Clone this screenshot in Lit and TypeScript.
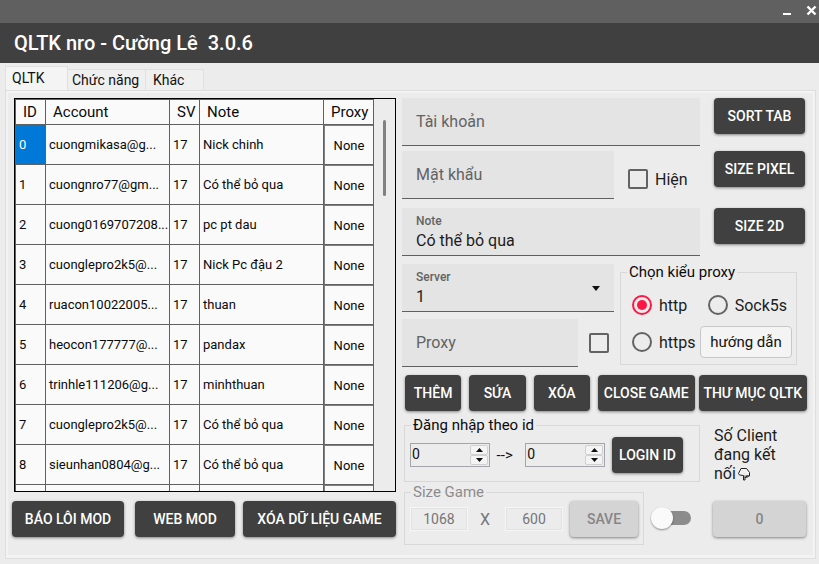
import { LitElement, html, css, svg, nothing } from "lit";
import { customElement, property, state } from "lit/decorators.js";

interface Account {
  id: number;
  account: string;
  sv: number;
  note: string;
  proxy: string;
}

const ACCOUNTS: Account[] = [
  { id: 0, account: "cuongmikasa@g...", sv: 17, note: "Nick chinh", proxy: "None" },
  { id: 1, account: "cuongnro77@gm...", sv: 17, note: "Có thể bỏ qua", proxy: "None" },
  { id: 2, account: "cuong0169707208...", sv: 17, note: "pc pt dau", proxy: "None" },
  { id: 3, account: "cuonglepro2k5@...", sv: 17, note: "Nick Pc đậu 2", proxy: "None" },
  { id: 4, account: "ruacon10022005...", sv: 17, note: "thuan", proxy: "None" },
  { id: 5, account: "heocon177777@...", sv: 17, note: "pandax", proxy: "None" },
  { id: 6, account: "trinhle111206@g...", sv: 17, note: "minhthuan", proxy: "None" },
  { id: 7, account: "cuonglepro2k5@...", sv: 17, note: "Có thể bỏ qua", proxy: "None" },
  { id: 8, account: "sieunhan0804@g...", sv: 17, note: "Có thể bỏ qua", proxy: "None" },
];

const base = css`
  * {
    box-sizing: border-box;
  }
  button,
  input,
  select {
    font: inherit;
    color: inherit;
    margin: 0;
    padding: 0;
    border: 0;
    background: none;
    border-radius: 0;
    appearance: none;
    outline: none;
    min-width: 0;
  }
`;

@customElement("account-table")
export class AccountTable extends LitElement {
  @property({ attribute: false }) rows: Account[] = [];
  @state() private selected = 0;

  static styles = [
    base,
    css`
      :host {
        display: grid;
        grid-template-columns: minmax(0, 1fr) 21px;
        align-items: start;
        flex: 1 1 0;
        min-height: 0;
        overflow: hidden;
        border: 1px solid #000;
        color: #0a0a0a;
      }
      table {
        width: 100%;
        table-layout: fixed;
        border-collapse: separate;
        border-spacing: 0;
        background: #fafafa;
        border-top: 1px solid #606060;
        border-left: 1px solid #606060;
      }
      th,
      td {
        padding: 0 0 0 3px;
        border-right: 1px solid #606060;
        border-bottom: 1px solid #606060;
        text-align: left;
        white-space: nowrap;
        overflow: hidden;
        font-size: 13px;
      }
      th {
        height: 25px;
        padding-left: 7px;
        font-size: 15px;
        font-weight: 400;
      }
      td {
        height: 40px;
      }
      .id,
      .sv {
        width: 30px;
      }
      .proxy {
        width: 50px;
      }
      .selected {
        background: #0078d7;
        color: #fff;
      }
      td.cell {
        padding: 0;
      }
      .cell button {
        display: block;
        width: 100%;
        height: 39px;
        border-top: 1px solid #808080;
        border-left: 1px solid #808080;
      }
      .gutter {
        padding: 21px 0 0 9px;
      }
      .thumb {
        width: 3px;
        height: 76px;
        border-radius: 2px;
        background: #808080;
      }
    `,
  ];

  render() {
    return html`
      <table>
        <thead>
          <tr>
            <th class="id">ID</th>
            <th>Account</th>
            <th class="sv">SV</th>
            <th>Note</th>
            <th class="proxy">Proxy</th>
          </tr>
        </thead>
        <tbody>
          ${this.rows.map(
            (r) => html`<tr @click=${() => (this.selected = r.id)}>
              <td class=${r.id === this.selected ? "selected" : ""}>${r.id}</td>
              <td>${r.account}</td>
              <td>${r.sv}</td>
              <td>${r.note}</td>
              <td class="cell"><button>${r.proxy}</button></td>
            </tr>`
          )}
          <tr>
            <td></td>
            <td></td>
            <td></td>
            <td></td>
            <td class="cell"><button aria-label="Proxy"></button></td>
          </tr>
        </tbody>
      </table>
      <div class="gutter"><div class="thumb"></div></div>
    `;
  }
}

@customElement("number-spin")
export class NumberSpin extends LitElement {
  @property() label = "";
  @property({ type: Number }) value = 0;

  static styles = [
    base,
    css`
      :host {
        display: flex;
        width: 80px;
        height: 24px;
        padding: 1px;
        border: 1px solid #a4a4ac;
        color: #111;
        font-size: 14px;
      }
      input {
        flex: 1;
        height: 18px;
        line-height: 18px;
      }
      .steps {
        display: flex;
        flex-direction: column;
        width: 18px;
      }
      .steps button {
        flex: 1;
        display: flex;
        align-items: center;
        justify-content: center;
        border: 1px solid #d0d0d0;
        border-radius: 2px;
        background: #f4f4f4;
      }
    `,
  ];

  render() {
    return html`
      <input aria-label=${this.label} .value=${String(this.value)} />
      <div class="steps">
        <button aria-label="+" @click=${() => this.value++}>
          <svg width="7" height="4"><path d="M0 4 3.500 0 7 4z" fill="#111" /></svg>
        </button>
        <button aria-label="-" @click=${() => this.value--}>
          <svg width="7" height="4"><path d="M0 0h7L3.500 4z" fill="#111" /></svg>
        </button>
      </div>
    `;
  }
}

@customElement("app-root")
export class AppRoot extends LitElement {
  static styles = [
    base,
    css`
      :host {
        display: flex;
        flex-direction: column;
        min-height: 100vh;
        background: #ececec;
        font-family: Roboto, "Liberation Sans", sans-serif;
        font-size: 16px;
        color: #1c1c1c;
      }
      .titlebar {
        display: flex;
        justify-content: flex-end;
        height: 23px;
        background: #606060;
      }
      .titlebar button {
        width: 24px;
        height: 23px;
      }
      .titlebar svg {
        display: block;
      }
      h1 {
        margin: 0;
        padding: 0 14px;
        height: 40px;
        line-height: 40px;
        background: #404040;
        color: #fff;
        font-size: 20px;
        font-weight: 500;
        white-space: pre;
      }
      .tabs {
        display: flex;
        align-items: flex-end;
        height: 27px;
        padding-left: 5px;
        font-size: 14px;
        color: #111;
      }
      .tab {
        height: 21px;
        padding: 0 4px 1px;
        text-align: left;
        white-space: nowrap;
        background: #efefef;
        border: 1px solid #e0e0e0;
        border-left: 0;
        border-bottom: 0;
      }
      .tab.functions {
        width: 78px;
      }
      .tab.other {
        width: 58px;
        padding-left: 7px;
      }
      .tab.active {
        width: 63px;
        height: 24px;
        padding: 0 6px 2px;
        border-left: 1px solid #e0e0e0;
        background: #f4f4f4;
      }
      .panel {
        flex: 1;
        margin: 0 3px 5px 5px;
        padding: 2px;
        border: 1px solid #dedede;
        background: #f3f3f3;
      }
      .content {
        display: grid;
        grid-template-columns: 384fr 405fr;
        column-gap: 6px;
        height: 100%;
        padding: 5px 6px 10px 4px;
        background: #ececec;
      }
      .left {
        display: flex;
        flex-direction: column;
        padding-bottom: 8px;
        min-width: 0;
      }
      account-table {
        margin-left: 2px;
      }
      .actions {
        display: flex;
        gap: 8px;
        margin-top: 9px;
      }
      .links {
        display: flex;
        gap: 11px;
        flex: 223 1 0;
      }
      .btn {
        display: block;
        height: 36px;
        border-radius: 4px;
        background: #404040;
        color: #fff;
        font-size: 14px;
        font-weight: 500;
        white-space: nowrap;
        text-align: center;
        box-shadow: 0 1px 3px rgba(0, 0, 0, 0.45);
      }
      .w-s {
        flex: 56 1 0;
      }
      .w-m {
        flex: 98 1 0;
      }
      .w-l {
        flex: 110 1 0;
      }
      .w-xl {
        flex: 153 1 0;
      }
      .pair {
        display: flex;
        gap: 4px;
        flex: 208 1 0;
      }
      .btn[disabled] {
        background: #d4d4d4;
        color: #868686;
      }
      .right {
        display: flex;
        flex-direction: column;
        min-width: 0;
      }
      .row {
        display: flex;
        align-items: flex-start;
        justify-content: space-between;
        padding-right: 2px;
      }
      .row + .row {
        margin-top: 5px;
      }
      .row + .row.spaced {
        margin-top: 9px;
      }
      .side {
        width: 91px;
        margin-left: 14px;
      }
      .grow {
        flex: 1;
      }
      .field {
        display: block;
        position: relative;
        height: 48px;
        background: #e4e4e4;
        border-bottom: 1px solid #606060;
      }
      .field input,
      .field select {
        display: block;
        width: 100%;
        height: 47px;
        padding: 0 14px;
      }
      .field input::placeholder {
        color: #636363;
        opacity: 1;
      }
      .field.filled input,
      .field.filled select {
        padding-top: 17px;
      }
      .caption {
        position: absolute;
        left: 14px;
        top: 6px;
        font-size: 12px;
        line-height: 14px;
        font-weight: 500;
        color: #636363;
      }
      .caret {
        position: absolute;
        right: 14px;
        top: 22px;
      }
      .check {
        display: flex;
        align-items: center;
        gap: 7px;
      }
      .check input {
        width: 20px;
        height: 20px;
        border: 2px solid #636363;
        border-radius: 2px;
      }
      .hien {
        width: 70px;
        margin: 18px 2px 0 14px;
      }
      .proxyarea {
        display: flex;
        gap: 6px;
        margin-top: 8px;
        padding-right: 10px;
      }
      .stack {
        flex: 1;
        min-width: 0;
        display: flex;
        flex-direction: column;
        gap: 7px;
      }
      .proxyline {
        display: flex;
        align-items: center;
        gap: 11px;
        padding-right: 5px;
      }
      fieldset {
        margin: 0;
        min-width: 0;
        padding: 0 5px;
        border: 1px solid #d8d8d8;
      }
      legend {
        height: 16px;
        margin-left: 1px;
        padding: 0 2px;
        line-height: 16px;
        font-size: 15px;
        color: #0a0a0a;
      }
      .kinds {
        width: 177px;
        height: 101px;
        padding: 0 4px 0 11px;
      }
      .kinds legend {
        margin-left: -5px;
      }
      .line {
        display: flex;
        justify-content: space-between;
        align-items: center;
        height: 32px;
        margin-top: 5px;
      }
      .line:first-of-type {
        margin-top: 9px;
      }
      .radio {
        display: flex;
        align-items: center;
        gap: 7px;
      }
      .radio input {
        width: 20px;
        height: 20px;
        border: 2px solid #636363;
        border-radius: 50%;
      }
      .radio input:checked {
        border-color: #ff1744;
        background: #ff1744;
        background-clip: content-box;
        padding: 3px;
      }
      .sock {
        margin-right: 5px;
      }
      .guide {
        width: 92px;
        height: 32px;
        border: 1px solid #c8c8c8;
        border-radius: 4px;
        background: #f4f4f4;
        font-size: 15px;
        color: #111;
      }
      .commands {
        display: flex;
        gap: 8px;
        margin-top: 8px;
        padding-left: 3px;
      }
      .bottom {
        display: flex;
        justify-content: space-between;
        margin-top: 6px;
        padding: 0 1px 0 2px;
      }
      .groups {
        width: 296px;
        display: flex;
        flex-direction: column;
        gap: 2px;
      }
      .login {
        height: 65px;
      }
      .size {
        width: 240px;
        height: 61px;
        color: #767676;
      }
      .size legend {
        color: #8c8c8c;
      }
      .inner {
        display: flex;
        align-items: center;
        height: 36px;
        margin-top: 1px;
      }
      .login .inner {
        justify-content: space-between;
        margin-top: 4px;
        padding-right: 11px;
      }
      .login .btn {
        width: 71px;
      }
      .login .to {
        margin-right: 6px;
        font-size: 15px;
        color: #111;
      }
      .size .btn {
        width: 68px;
        margin-left: auto;
      }
      .dim {
        width: 58px;
        height: 24px;
        border: 1px solid #f6f6f6;
        outline: 1px solid #e2e2e2;
        outline-offset: -2px;
        text-align: center;
        font-size: 14px;
      }
      .times {
        margin: 0 15px 0 12px;
      }
      .sizes {
        display: flex;
        align-items: flex-end;
        justify-content: space-between;
        padding-right: 9px;
      }
      .switch {
        display: block;
        width: 40px;
        height: 22px;
        margin-bottom: 16px;
      }
      .switch input {
        display: flex;
        align-items: center;
        width: 40px;
        height: 22px;
        background: linear-gradient(#8c8c8c, #8c8c8c) 8px 4px / 24px 14px no-repeat;
      }
      .switch input::before {
        content: "";
        width: 22px;
        height: 22px;
        border-radius: 50%;
        background: #fafafa;
        box-shadow: 0 1px 2px rgba(0, 0, 0, 0.4);
      }
      .switch input::after {
        content: "";
        width: 14px;
        height: 14px;
        margin-left: 4px;
        border-radius: 0 7px 7px 0;
        background: #8c8c8c;
      }
      .clients {
        display: flex;
        flex-direction: column;
        justify-content: space-between;
        width: 93px;
        padding: 9px 0 8px;
      }
      .clients p {
        margin: 0;
        padding: 0 16px 0 1px;
        line-height: 19px;
      }
      .clients .end {
        white-space: nowrap;
      }
      .clients svg {
        margin-left: 1px;
        vertical-align: -2px;
      }
    `,
  ];

  @state() private kind = "http";

  private radio(value: string, cls = "") {
    return html`<label class="radio ${cls}">
      <input
        type="radio"
        name="kind"
        .checked=${this.kind === value}
        @change=${() => (this.kind = value)}
      />${value}</label
    >`;
  }

  private field(label: string, value = "") {
    return html`<label class="field grow ${value ? "filled" : ""}">
      ${value ? html`<span class="caption">${label}</span>` : nothing}
      <input aria-label=${label} placeholder=${label} .value=${value} />
    </label>`;
  }

  render() {
    return html`
      <div class="titlebar">
        <button aria-label="Minimize">
          <svg width="24" height="23"><path d="M12 14h8" stroke="#fff" stroke-width="2" /></svg>
        </button>
        <button aria-label="Close">
          <svg width="24" height="23">
            <path d="M12.500 6.500l8 8M20.500 6.500l-8 8" stroke="#fff" stroke-width="2.400" />
          </svg>
        </button>
      </div>
      <h1>QLTK nro - Cường Lê  3.0.6</h1>
      <nav class="tabs">
        <button class="tab active">QLTK</button>
        <button class="tab functions">Chức năng</button>
        <button class="tab other">Khác</button>
      </nav>
      <main class="panel">
        <div class="content">
          <section class="left">
            <account-table .rows=${ACCOUNTS}></account-table>
            <div class="actions">
              <div class="links">
                <button class="btn w-l">BÁO LÔI MOD</button>
                <button class="btn w-m">WEB MOD</button>
              </div>
              <button class="btn w-xl">XÓA DỮ LIỆU GAME</button>
            </div>
          </section>
          <section class="right">
            <div class="row">
              ${this.field("Tài khoản")}
              <button class="btn side">SORT TAB</button>
            </div>
            <div class="row">
              ${this.field("Mật khẩu")}
              <label class="check hien"><input type="checkbox" />Hiện</label>
              <button class="btn side">SIZE PIXEL</button>
            </div>
            <div class="row spaced">
              ${this.field("Note", "Có thể bỏ qua")}
              <button class="btn side">SIZE 2D</button>
            </div>
            <div class="proxyarea">
              <div class="stack">
                <label class="field filled">
                  <span class="caption">Server</span>
                  <select>
                    <option>1</option>
                  </select>
                  <svg class="caret" width="8" height="5"><path d="M0 0h8L4 5z" fill="#111" /></svg>
                </label>
                <div class="proxyline">
                  ${this.field("Proxy")}
                  <div class="check"><input type="checkbox" aria-label="Proxy" /></div>
                </div>
              </div>
              <fieldset class="kinds">
                <legend>Chọn kiểu proxy</legend>
                <div class="line">${this.radio("http")} ${this.radio("Sock5s", "sock")}</div>
                <div class="line">
                  ${this.radio("https")}
                  <button class="guide">hướng dẫn</button>
                </div>
              </fieldset>
            </div>
            <div class="commands">
              <button class="btn w-s">THÊM</button>
              <button class="btn w-s">SỨA</button>
              <button class="btn w-s">XÓA</button>
              <div class="pair">
                <button class="btn w-m">CLOSE GAME</button>
                <button class="btn w-l">THƯ MỤC QLTK</button>
              </div>
            </div>
            <div class="bottom">
              <div class="groups">
                <fieldset class="login">
                  <legend>Đăng nhập theo id</legend>
                  <div class="inner">
                    <number-spin label="Từ id"></number-spin>
                    <span class="to">--&gt;</span>
                    <number-spin label="Đến id"></number-spin>
                    <button class="btn">LOGIN ID</button>
                  </div>
                </fieldset>
                <div class="sizes">
                  <fieldset class="size">
                    <legend>Size Game</legend>
                    <div class="inner">
                      <input class="dim" aria-label="Width" value="1068" disabled />
                      <span class="times">X</span>
                      <input class="dim" aria-label="Height" value="600" disabled />
                      <button class="btn" disabled>SAVE</button>
                    </div>
                  </fieldset>
                  <label class="switch"><input type="checkbox" role="switch" aria-label="Size Game" /></label>
                </div>
              </div>
              <div class="clients">
                <p>
                  Số Client đang kết
                  <span class="end"
                    >nối<svg width="14" height="14" viewBox="0 0 14 14">
                      ${svg`<path
                      d="M4 1.500h5.500l3 4v3.500h-1.500l-.5-1M11 9v1H9.500V8.500M9.500 10.500H8V8.500M8 10v3H6.500V8.500l-4-.5L1.500 6.500 4 1.500"
                      fill="#f4f4f4" stroke="#222" stroke-width="1" stroke-linejoin="round"/>`}
                    </svg></span
                  >
                </p>
                <button class="btn" disabled>0</button>
              </div>
            </div>
          </section>
        </div>
      </main>
    `;
  }
}
